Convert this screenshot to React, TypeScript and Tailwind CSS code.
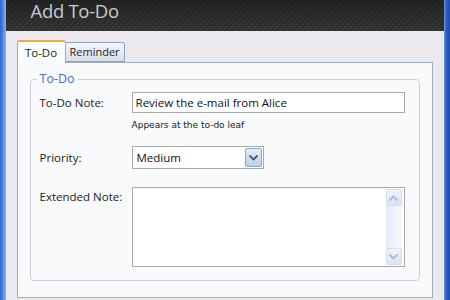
import React from "react";

const Chevron = ({ up = false, color = "#4a5a7a", w = 9 }: { up?: boolean; color?: string; w?: number }) => (
  <svg width={w} height={6} viewBox="0 0 9 6" className="block">
    <path
      d={up ? "M1 5 L4.5 1.5 L8 5" : "M1 1 L4.5 4.5 L8 1"}
      fill="none"
      stroke={color}
      strokeWidth={1.8}
      strokeLinecap="round"
      strokeLinejoin="round"
    />
  </svg>
);

export default function App() {
  const font = { fontFamily: '"Open Sans", "Noto Sans", sans-serif' };
  return (
    <div className="w-[450px] h-[300px] flex overflow-hidden" style={font}>
      <div className="w-[6px] h-full bg-[linear-gradient(90deg,#2f62d0,#5a8ee8_60%,#8fb6f0)]" />
      <div className="flex-1 flex flex-col bg-[#ebe9ee]">
        <div className="h-[31px] shrink-0 bg-[linear-gradient(180deg,rgba(20,20,20,0.55),rgba(70,70,70,0.1)),repeating-linear-gradient(135deg,#2c2c2c_0px,#2c2c2c_2px,#383838_2px,#383838_4px)] flex items-start pl-[25px]">
          <span className="text-[18.5px] leading-[22px] text-[#c3ccd6] tracking-[-0.3px]">Add To-Do</span>
        </div>
        <div className="flex-1 flex flex-col pl-[11px] pr-[11px] pt-[9px]">
          <div className="flex items-end h-[23px] relative z-10">
            <div className="w-[49px] h-[23px] bg-[#fafbfc] border-x border-[#9fb0c4] border-t-2 border-t-[#f2a93b] rounded-t-[3px] flex items-center justify-center text-[11.5px] text-[#1e1e1e]">
              To-Do
            </div>
            <div className="w-[59px] h-[20px] mb-[1px] bg-[linear-gradient(180deg,#f4f6fa,#d9e0ea)] border border-[#8ea2bc] border-l-0 rounded-tr-[3px] flex items-center justify-center text-[11px] text-[#1e1e1e]">
              Reminder
            </div>
          </div>
          <div className="w-[416px] h-[236px] -mt-[1px] bg-[#f9fafc] border border-[#9fb0c4] pt-[9px] px-[12px]">
            <fieldset className="border border-[#c8cfd9] rounded-[4px] h-[209px] pl-[9px] pr-[14px]">
              <legend className="-ml-[3px] px-[3px] text-[12.5px] leading-[14px] text-[#4a6bd0]">To-Do</legend>
              <div className="grid grid-cols-[92px_273px] mt-[6px] text-[11.5px] text-[#222]">
                <div className="h-[21px] flex items-center">To-Do Note:</div>
                <div className="h-[21px] border border-[#a9a9a9] bg-white flex items-center pl-[3px] text-[#111]">
                  Review the e-mail from Alice
                </div>
                <div />
                <div
                  className="text-[9px] leading-[12px] mt-[6px] text-[#222]"
                  style={{ fontFamily: '"DejaVu Sans", sans-serif' }}
                >
                  Appears at the to-do leaf
                </div>
                <div className="h-[23px] mt-[15px] flex items-center">Priority:</div>
                <div className="mt-[15px]">
                  <div className="w-[132px] h-[23px] border border-[#a9a9a9] bg-white flex items-center justify-between pl-[4px] p-[1px]">
                    <span className="text-[#111]">Medium</span>
                    <div className="w-[17px] h-[19px] border border-[#8ea4c4] rounded-[2px] bg-[linear-gradient(180deg,#e6eef9,#bdd0ea)] flex items-center justify-center">
                      <Chevron />
                    </div>
                  </div>
                </div>
                <div className="mt-[18px] flex items-start pt-[1px]">Extended Note:</div>
                <div className="mt-[18px] h-[80px] border border-[#a9a9a9] bg-white flex justify-end pr-[2px] py-[1px]">
                  <div className="w-[16px] h-full flex flex-col justify-between bg-[linear-gradient(90deg,#e6eef9,#f5f8fd)] rounded-[2px]">
                    <div className="h-[17px] border border-[#d2def0] rounded-[2px] bg-[linear-gradient(180deg,#eef4fc,#d8e5f6)] flex items-center justify-center">
                      <Chevron up color="#a9bbd6" w={9} />
                    </div>
                    <div className="h-[17px] border border-[#d2def0] rounded-[2px] bg-[linear-gradient(180deg,#eef4fc,#d8e5f6)] flex items-center justify-center">
                      <Chevron color="#a9bbd6" w={9} />
                    </div>
                  </div>
                </div>
              </div>
            </fieldset>
          </div>
        </div>
      </div>
      <div className="w-[7px] h-full bg-[linear-gradient(90deg,#6d94dc,#2d5cc4_40%,#1f4cb0)]" />
    </div>
  );
}
